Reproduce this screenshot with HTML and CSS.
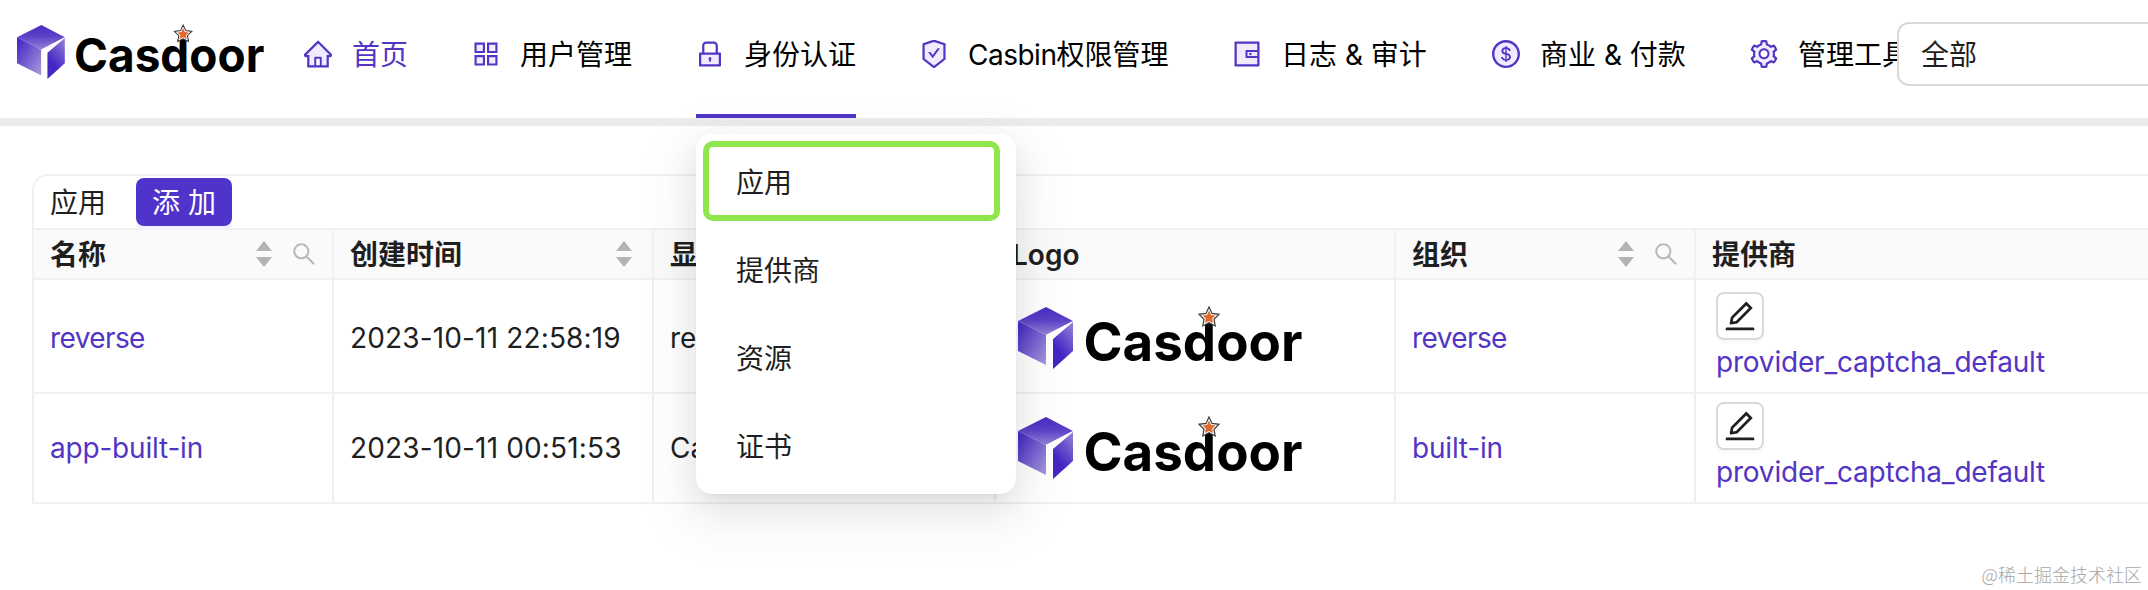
FILE: index.html
```
<!DOCTYPE html>
<html lang="zh-CN">
<head>
<meta charset="utf-8">
<title>Casdoor</title>
<link rel="stylesheet" href="styles.css">
</head>
<body>
<svg class="defs" width="0" height="0" aria-hidden="true">
  <defs>
    <linearGradient id="g-top" x1="0" y1="0" x2="0" y2="1"><stop offset="0" stop-color="#4a2cc2"/><stop offset=".45" stop-color="#5b40c8"/><stop offset="1" stop-color="#9484d8"/></linearGradient>
    <linearGradient id="g-left" x1="0" y1="0" x2="1" y2="1"><stop offset=".1" stop-color="#4a2dc6"/><stop offset="1" stop-color="#a99bdc"/></linearGradient>
    <linearGradient id="g-right" x1=".8" y1="0" x2=".3" y2="1"><stop offset="0" stop-color="#8d7bd6"/><stop offset=".7" stop-color="#4526c4"/></linearGradient>
    <symbol id="logo" viewBox="0 0 284 64">
      <path fill="url(#g-top)" d="M28 1 55 15 28 29 0 15z"/>
      <path fill="url(#g-left)" d="M0 15 28 29V59L0 45z"/>
      <path fill="#fff" d="M28 29 55 15 35 34V63L28 59z"/>
      <path fill="url(#g-right)" d="M35 33 55 16V45L35 63z"/>
      <text class="logo-text" x="65.500" y="54.500" textLength="219" lengthAdjust="spacingAndGlyphs">Casdoor</text>
      <path fill="#fff" stroke="#3c3c3c" stroke-width="1.2" d="M191 1 194 7.400 201 8.300 196 13.200 197.200 20 191 16.800 184.800 20 186 13.200 181 8.300 188 7.400z"/>
      <path fill="#e2692c" d="M191 4.500 193 8.900 197.500 9.500 194.200 12.600 195 17 191 14.900 187 17 187.800 12.600 184.500 9.500 189 8.900z"/>
    </symbol>
    <symbol id="sort" viewBox="0 0 16 26"><path d="M8 0 16 10H0zM0 16H16L8 26z"/></symbol>
    <symbol id="search" viewBox="64 64 896 896"><path d="M909.6 854.5L649.9 594.8C690.2 542.7 712 479 712 412c0-80.2-31.3-155.4-87.9-212.1-56.6-56.7-132-87.9-212.1-87.9s-155.500 31.3-212.1 87.9C143.2 256.5 112 331.8 112 412c0 80.1 31.3 155.5 87.9 212.1C256.5 680.8 331.8 712 412 712c67 0 130.6-21.8 182.7-62l259.7 259.6a8.2 8.2 0 0 0 11.6 0l43.6-43.5a8.2 8.2 0 0 0 0-11.600zM570.4 570.4C528 612.7 471.8 636 412 636s-116-23.3-158.4-65.6C211.3 528 188 471.8 188 412s23.3-116.1 65.6-158.4C296 211.3 352.2 188 412 188s116.1 23.2 158.4 65.6S636 352.2 636 412s-23.3 116.1-65.6 158.4z"/></symbol>
    <symbol id="edit" viewBox="64 64 896 896"><path d="M257.7 752c2 0 4-.2 6-.5L431.9 722c2-.4 3.9-1.3 5.3-2.8l423.9-423.9a9.96 9.96 0 0 0 0-14.1L694.9 114.9c-1.9-1.9-4.4-2.9-7.1-2.9s-5.2 1-7.1 2.9L256.800 538.8c-1.5 1.5-2.4 3.3-2.8 5.3l-29.5 168.2a33.5 33.5 0 0 0 9.4 29.8c6.600 6.4 14.9 9.9 23.8 9.9zm67.4-174.4L687.8 215l73.3 73.3-362.7 362.6-88.9 15.7 15.6-89zM880 836H144c-17.7 0-32 14.3-32 32v36c0 4.4 3.6 8 8 8h784c4.4 0 8-3.6 8-8v-36c0-17.7-14.3-32-32-32z"/></symbol>
  </defs>
</svg>

<header class="header">
  <svg class="brand"><use href="#logo"/></svg>
  <nav class="nav">
    <a class="nav-item nav-home">
      <svg class="icon" viewBox="64 64 896 896"><path class="tone" d="M786 542v326H632V640c0-22-18-40-40-40H432c-22 0-40 18-40 40v228H238V542h-96l370-370 370 370z"/><path d="M946.5 505L560.1 118.8l-25.9-25.9a31.5 31.5 0 0 0-44.4 0L77.5 505a63.9 63.9 0 0 0-18.8 46c.4 35.2 29.7 63.3 64.9 63.3h42.5V940h691.8V614.3h43.4c17.1 0 33.2-6.7 45.3-18.8a63.6 63.6 0 0 0 18.7-45.3c0-17-6.7-33.1-18.8-45.2zM568 868H456V664h112v204zm217.9-325.7V868H632V640c0-22.1-17.9-40-40-40H432c-22.1 0-40 17.9-40 40v228H238.1V542.3h-96l370-369.7 23.1 23.1L882 542.3h-96.1z"/></svg>
      <span>首页</span>
    </a>
    <a class="nav-item nav-users">
      <svg class="icon" viewBox="64 64 896 896"><path class="tone" d="M180 180h264v264H180zM580 180h264v264H580zM180 580h264v264H180zM580 580h264v264H580z"/><path fill-rule="evenodd" d="M144 144h336v336H144zM212 212v200h200V212zM544 144h336v336H544zM612 212v200h200V212zM144 544h336v336H144zM212 612v200h200V612zM544 544h336v336H544zM612 612v200h200V612z"/></svg>
      <span>用户管理</span>
    </a>
    <div class="nav-item nav-identity active">
      <svg class="icon" viewBox="64 64 896 896"><path class="tone" d="M232 536h560v304H232z"/><path d="M832 464h-68V240c0-70.7-57.3-128-128-128H388c-70.7 0-128 57.3-128 128v224h-68c-17.7 0-32 14.3-32 32v384c0 17.7 14.3 32 32 32h640c17.7 0 32-14.3 32-32V496c0-17.7-14.3-32-32-32zM332 240c0-30.9 25.1-56 56-56h248c30.9 0 56 25.1 56 56v224H332V240zm460 600H232V536h560v304zM484 701v53c0 4.4 3.6 8 8 8h40c4.4 0 8-3.6 8-8v-53a48.01 48.01 0 1 0-56 0z"/></svg>
      <span>身份认证</span>
      <div class="dropdown">
        <a class="option marked">应用</a>
        <a class="option">提供商</a>
        <a class="option">资源</a>
        <a class="option">证书</a>
      </div>
    </div>
    <a class="nav-item nav-casbin">
      <svg class="icon" viewBox="64 64 896 896"><path class="tone" d="M214 227l298-102 298 102v427L512 887 214 654z"/><path d="M866.9 169.9L527.1 54.1C523 52.7 517.5 52 512 52s-11 .7-15.1 2.1L157.1 169.9c-8.3 2.8-15.1 12.4-15.1 21.2v482.4c0 8.8 5.7 20.4 12.6 25.9L499.3 968c3.5 2.7 8 4.1 12.6 4.1s9.2-1.4 12.6-4.1l344.7-268.6c6.9-5.4 12.6-17 12.6-25.9V191.1c.2-8.8-6.6-18.3-14.9-21.2zM810 654.3L512 886.5 214 654.3V226.7l298-101.6 298 101.6v427.6zm-405.8-201c-3-4.1-7.8-6.6-13-6.6H336c-6.5 0-10.3 7.4-6.5 12.7l126.4 174a16.1 16.1 0 0 0 26 0l212.6-292.7c3.8-5.3 0-12.7-6.5-12.7h-55.2c-5.1 0-10 2.5-13 6.6L468.9 542.4l-64.7-89.1z"/></svg>
      <span><span class="tight">Casbin</span>权限管理</span>
    </a>
    <a class="nav-item nav-logs">
      <svg class="icon" viewBox="64 64 896 896"><path class="tone" d="M184 184h656v656H184z"/><path d="M880 112H144c-17.7 0-32 14.3-32 32v736c0 17.7 14.3 32 32 32h736c17.7 0 32-14.3 32-32V144c0-17.7-14.3-32-32-32zm-40 464H528V448h312v128zm0 264H184V184h656v200H496c-17.7 0-32 14.3-32 32v192c0 17.7 14.3 32 32 32h344v200zM580 512a40 40 0 1 0 80 0 40 40 0 1 0-80 0z"/></svg>
      <span>日志 &amp; 审计</span>
    </a>
    <a class="nav-item nav-business">
      <svg class="icon" viewBox="64 64 896 896"><circle class="tone" cx="512" cy="512" r="400"/><path d="M512 64C264.6 64 64 264.6 64 512s200.6 448 448 448 448-200.6 448-448S759.4 64 512 64zm0 820c-205.4 0-372-166.6-372-372s166.6-372 372-372 372 166.6 372 372-166.6 372-372 372zm47.7-395.2l-25.4-5.9V348.6c38 5.2 61.5 29 65.5 58.2.5 4 3.9 6.900 7.9 6.9h44.9c4.7 0 8.4-4.1 8-8.8-6.1-62.3-57.4-102.3-125.9-109.2V263c0-4.4-3.6-8-8-8h-28.1c-4.4 0-8 3.6-8 8v33c-70.8 6.9-126.2 46-126.2 119 0 67.6 49.8 100.2 102.1 112.7l24.7 6.3v142.7c-44.2-5.9-69-29.5-74.1-61.3-.6-3.8-4-6.6-7.9-6.6H363c-4.7 0-8.4 4-8 8.7 4.5 55 46.2 105.6 135.2 112.1V761c0 4.4 3.6 8 8 8h28.4c4.4 0 8-3.6 8-8.1l-.2-31.7c78.3-6.9 134.3-48.8 134.3-124-.1-69.4-44.2-100.4-109-116.4zm-68.6-16.2c-5.6-1.6-10.3-3.1-15-5-33.8-12.2-49.5-31.9-49.5-57.3 0-36.3 27.5-57 64.5-61.7v124zM534.3 677V543.3c3.1.9 5.9 1.6 8.8 2.2 47.3 14.4 63.2 34.4 63.2 65.1 0 39.1-29.4 62.6-72 66.4z"/></svg>
      <span>商业 &amp; 付款</span>
    </a>
    <a class="nav-item nav-admin">
      <svg class="icon" viewBox="64 64 896 896"><path class="tone" d="M470 140h85l18 97 118 60 92-33 43 74-75 64v180l75 80-43 73-92-32-118 60-18 97h-85l-18-97-117-60-93 33-43-74 76-64V426l-76-64 43-74 93 33 117-60z"/><circle class="hole" cx="512" cy="502" r="130"/><path d="M924.8 625.7l-65.5-56c3.1-19 4.7-38.4 4.7-57.8s-1.6-38.8-4.7-57.8l65.5-56a32.03 32.03 0 0 0 9.3-35.2l-.9-2.6a443.74 443.74 0 0 0-79.7-137.9l-1.8-2.1a32.12 32.12 0 0 0-35.1-9.5l-81.3 28.9c-30-24.6-63.5-44-99.7-57.6l-15.7-85a32.05 32.05 0 0 0-25.8-25.7l-2.7-.5c-52.1-9.4-106.9-9.4-159 0l-2.7.5a32.05 32.05 0 0 0-25.8 25.7l-15.8 85.4a351.86 351.86 0 0 0-99 57.4l-81.9-29.1a32 32 0 0 0-35.1 9.5l-1.8 2.1a446.02 446.02 0 0 0-79.7 137.9l-.9 2.6c-4.5 12.5-.8 26.5 9.3 35.2l66.3 56.6c-3.1 18.8-4.6 38-4.6 57.1 0 19.2 1.5 38.4 4.6 57.1L99 625.5a32.03 32.03 0 0 0-9.3 35.2l.9 2.6c18.1 50.4 44.9 96.9 79.7 137.9l1.8 2.1a32.12 32.12 0 0 0 35.1 9.5l81.9-29.1c29.8 24.5 63.1 43.9 99 57.4l15.8 85.4a32.05 32.05 0 0 0 25.8 25.7l2.7.5a449.4 449.4 0 0 0 159 0l2.7-.5a32.05 32.05 0 0 0 25.8-25.7l15.7-85a350 350 0 0 0 99.7-57.6l81.3 28.9a32 32 0 0 0 35.1-9.5l1.8-2.1c34.8-41.1 61.6-87.5 79.7-137.9l.9-2.6c4.5-12.3.8-26.3-9.3-35zM788.3 465.9c2.5 15.1 3.8 30.6 3.8 46.1s-1.3 31-3.8 46.1l-6.6 40.1 74.7 63.9a370.03 370.03 0 0 1-42.6 73.6L721 702.8l-31.4 25.8c-23.9 19.6-50.5 35-79.3 45.8l-38.1 14.3-17.9 97a377.5 377.5 0 0 1-85 0l-17.9-97.2-37.8-14.5c-28.5-10.8-55-26.2-78.7-45.7l-31.4-25.9-93.4 33.2c-17-22.9-31.2-47.6-42.6-73.6l75.5-64.5-6.5-40c-2.4-14.9-3.7-30.3-3.7-45.5 0-15.3 1.2-30.6 3.7-45.5l6.5-40-75.5-64.5c11.3-26.1 25.6-50.7 42.6-73.6l93.4 33.2 31.4-25.9c23.7-19.5 50.2-34.9 78.7-45.7l37.9-14.3 17.9-97.2c28.1-3.2 56.8-3.2 85 0l17.9 97 38.1 14.3c28.7 10.8 55.4 26.2 79.3 45.8l31.4 25.8 92.8-32.9c17 22.9 31.2 47.6 42.6 73.6L781.8 426l6.5 39.9zM512 326c-97.2 0-176 78.8-176 176s78.8 176 176 176 176-78.8 176-176-78.8-176-176-176zm79.2 255.2A111.6 111.6 0 0 1 512 614c-29.9 0-58-11.7-79.2-32.8A111.6 111.6 0 0 1 400 502c0-29.9 11.7-58 32.8-79.2C454 401.6 482.1 390 512 390c29.9 0 58 11.6 79.2 32.8A111.6 111.6 0 0 1 624 502c0 29.9-11.7 58-32.8 79.2z"/></svg>
      <span>管理工具</span>
    </a>
  </nav>
  <div class="select">全部</div>
</header>

<main class="content">
  <section class="table">
    <div class="title"><span>应用</span><button class="add">添 加</button></div>
    <div class="row head">
      <div class="cell"><span>名称</span><svg class="sort"><use href="#sort"/></svg><svg class="search"><use href="#search"/></svg></div>
      <div class="cell only-sort"><span>创建时间</span><svg class="sort"><use href="#sort"/></svg></div>
      <div class="cell"><span>显示名称</span></div>
      <div class="cell"><span>Logo</span></div>
      <div class="cell"><span>组织</span><svg class="sort"><use href="#sort"/></svg><svg class="search"><use href="#search"/></svg></div>
      <div class="cell"><span>提供商</span></div>
    </div>
    <div class="row first">
      <div class="cell"><a class="tight">reverse</a></div>
      <div class="cell date">2023-10-11 22:58:19</div>
      <div class="cell">reverse</div>
      <div class="cell"><svg class="app-logo"><use href="#logo"/></svg></div>
      <div class="cell"><a class="tight">reverse</a></div>
      <div class="cell provider"><button class="edit"><svg><use href="#edit"/></svg></button><a>provider_captcha_default</a></div>
    </div>
    <div class="row">
      <div class="cell"><a>app-built-in</a></div>
      <div class="cell date">2023-10-11 00:51:53</div>
      <div class="cell">Casdoor</div>
      <div class="cell"><svg class="app-logo"><use href="#logo"/></svg></div>
      <div class="cell"><a>built-in</a></div>
      <div class="cell provider"><button class="edit"><svg><use href="#edit"/></svg></button><a>provider_captcha_default</a></div>
    </div>
  </section>
</main>
<footer class="watermark">@稀土掘金技术社区</footer>
</body>
</html>
```
FILE: styles.css
```
* { box-sizing: border-box; }
body {
  margin: 0;
  width: 2148px;
  height: 590px;
  overflow: hidden;
  display: flex;
  flex-direction: column;
  background: #fff;
  color: #1f1f1f;
  font: 28px/44px Inter, "Noto Sans CJK SC", sans-serif;
}
a { color: #5235c4; text-decoration: none; }
button { font: inherit; padding: 0; }
.defs { position: absolute; }

.header {
  display: flex;
  flex: none;
  height: 126px;
  padding-left: 17px;
  background: #fff;
  border-bottom: 8px solid #ececec;
}
.brand { width: 247px; height: 56px; margin-top: 24px; margin-right: 40px; flex: none; }
.logo-text { font: 700 54px Inter, Arial, sans-serif; fill: #000; }

.nav { display: flex; gap: 64px; flex: none; width: 1593px; height: 118px; white-space: nowrap; }
.nav-item {
  position: relative;
  display: flex;
  flex: none;
  gap: 20px;
  height: 118px;
  padding-top: 33px;
  color: #000;
}
.nav-home { width: 104px; color: #5235c4; }
.nav-users, .nav-identity { width: 160px; }
.nav-casbin { width: 249px; }
.nav-logs { width: 195px; }
.nav-business { width: 194px; }
.nav-admin { width: 160px; }
.active { border-bottom: 4px solid #5235c4; }
.icon { width: 28px; height: 28px; margin-top: 7px; flex: none; fill: #5235c4; }
.tone { fill: #f0ebff; }
.hole { fill: #fff; }

.select {
  position: relative;
  flex: none;
  width: 300px;
  height: 64px;
  margin-top: 22px;
  padding: 9px 22px;
  background: #fff;
  border: 2px solid #d9d9d9;
  border-radius: 12px;
}

.dropdown {
  position: absolute;
  z-index: 5;
  top: 134px;
  left: 0;
  width: 320px;
  height: 360px;
  padding: 8px;
  display: flex;
  flex-direction: column;
  gap: 8px;
  background: #fff;
  border-radius: 16px;
  box-shadow: 0 12px 32px rgba(0,0,0,.08), 0 6px 12px -8px rgba(0,0,0,.12), 0 18px 56px 16px rgba(0,0,0,.05);
}
.option { height: 80px; padding: 19px 32px; color: #1f1f1f; }
.marked {
  width: 297px;
  margin: -1px 0 1px -1px;
  padding: 14px 27px;
  border: 6px solid #8ee64c;
  border-radius: 10px;
}

.content { padding: 48px 0 0 32px; }
.table {
  width: 2200px;
  border: 2px solid #f0f0f0;
  border-bottom: 0;
  border-radius: 16px 0 0 0;
}
.title { display: flex; align-items: center; gap: 30px; height: 52px; padding-left: 16px; }
.title span { padding-top: 1px; }
.add {
  width: 96px;
  height: 48px;
  padding-top: 1px;
  border: 0;
  border-radius: 8px;
  color: #fff;
  background: #5033cb;
  box-shadow: 0 4px 0 #f4f0ff;
}
.row {
  display: grid;
  grid-template-columns: 300px 320px 342px 400px 300px 1fr;
  height: 110px;
  border-bottom: 2px solid #f0f0f0;
}
.row a { letter-spacing: -.2px; }
.row a.tight { letter-spacing: -.6px; }
.tight { letter-spacing: -.5px; }
.date { letter-spacing: .15px; }
.first { height: 114px; }
.first .cell { padding-top: 4px; }
.cell { display: flex; align-items: center; padding: 0 16px; border-right: 2px solid #f0f0f0; }
.head { height: 52px; border-top: 2px solid #f0f0f0; background: #fafafa; font-weight: 600; }
.head span { flex: 1; padding-top: 1px; }
.sort { width: 16px; height: 26px; fill: #b3b3b3; margin-right: 20px; }
.only-sort .sort { margin-right: 4px; }
.search { width: 24px; height: 24px; fill: #b8b8b8; }
.app-logo { width: 284px; height: 64px; margin-left: 6px; }
.provider, .first .provider { flex-direction: column; align-items: flex-start; justify-content: flex-end; padding: 0 20px 8px; }
.edit {
  width: 48px;
  height: 48px;
  display: grid;
  place-items: center;
  background: #fff;
  border: 2px solid #d9d9d9;
  border-radius: 8px;
  box-shadow: 0 4px 0 rgba(0,0,0,.02);
}
.edit svg { width: 32px; height: 32px; fill: #1f1f1f; }

.watermark {
  margin-top: auto;
  padding: 0 6px 2px 0;
  align-self: flex-end;
  color: #a6a6a6;
  font: 300 18px/28px "Noto Sans CJK SC", sans-serif;
}
```
